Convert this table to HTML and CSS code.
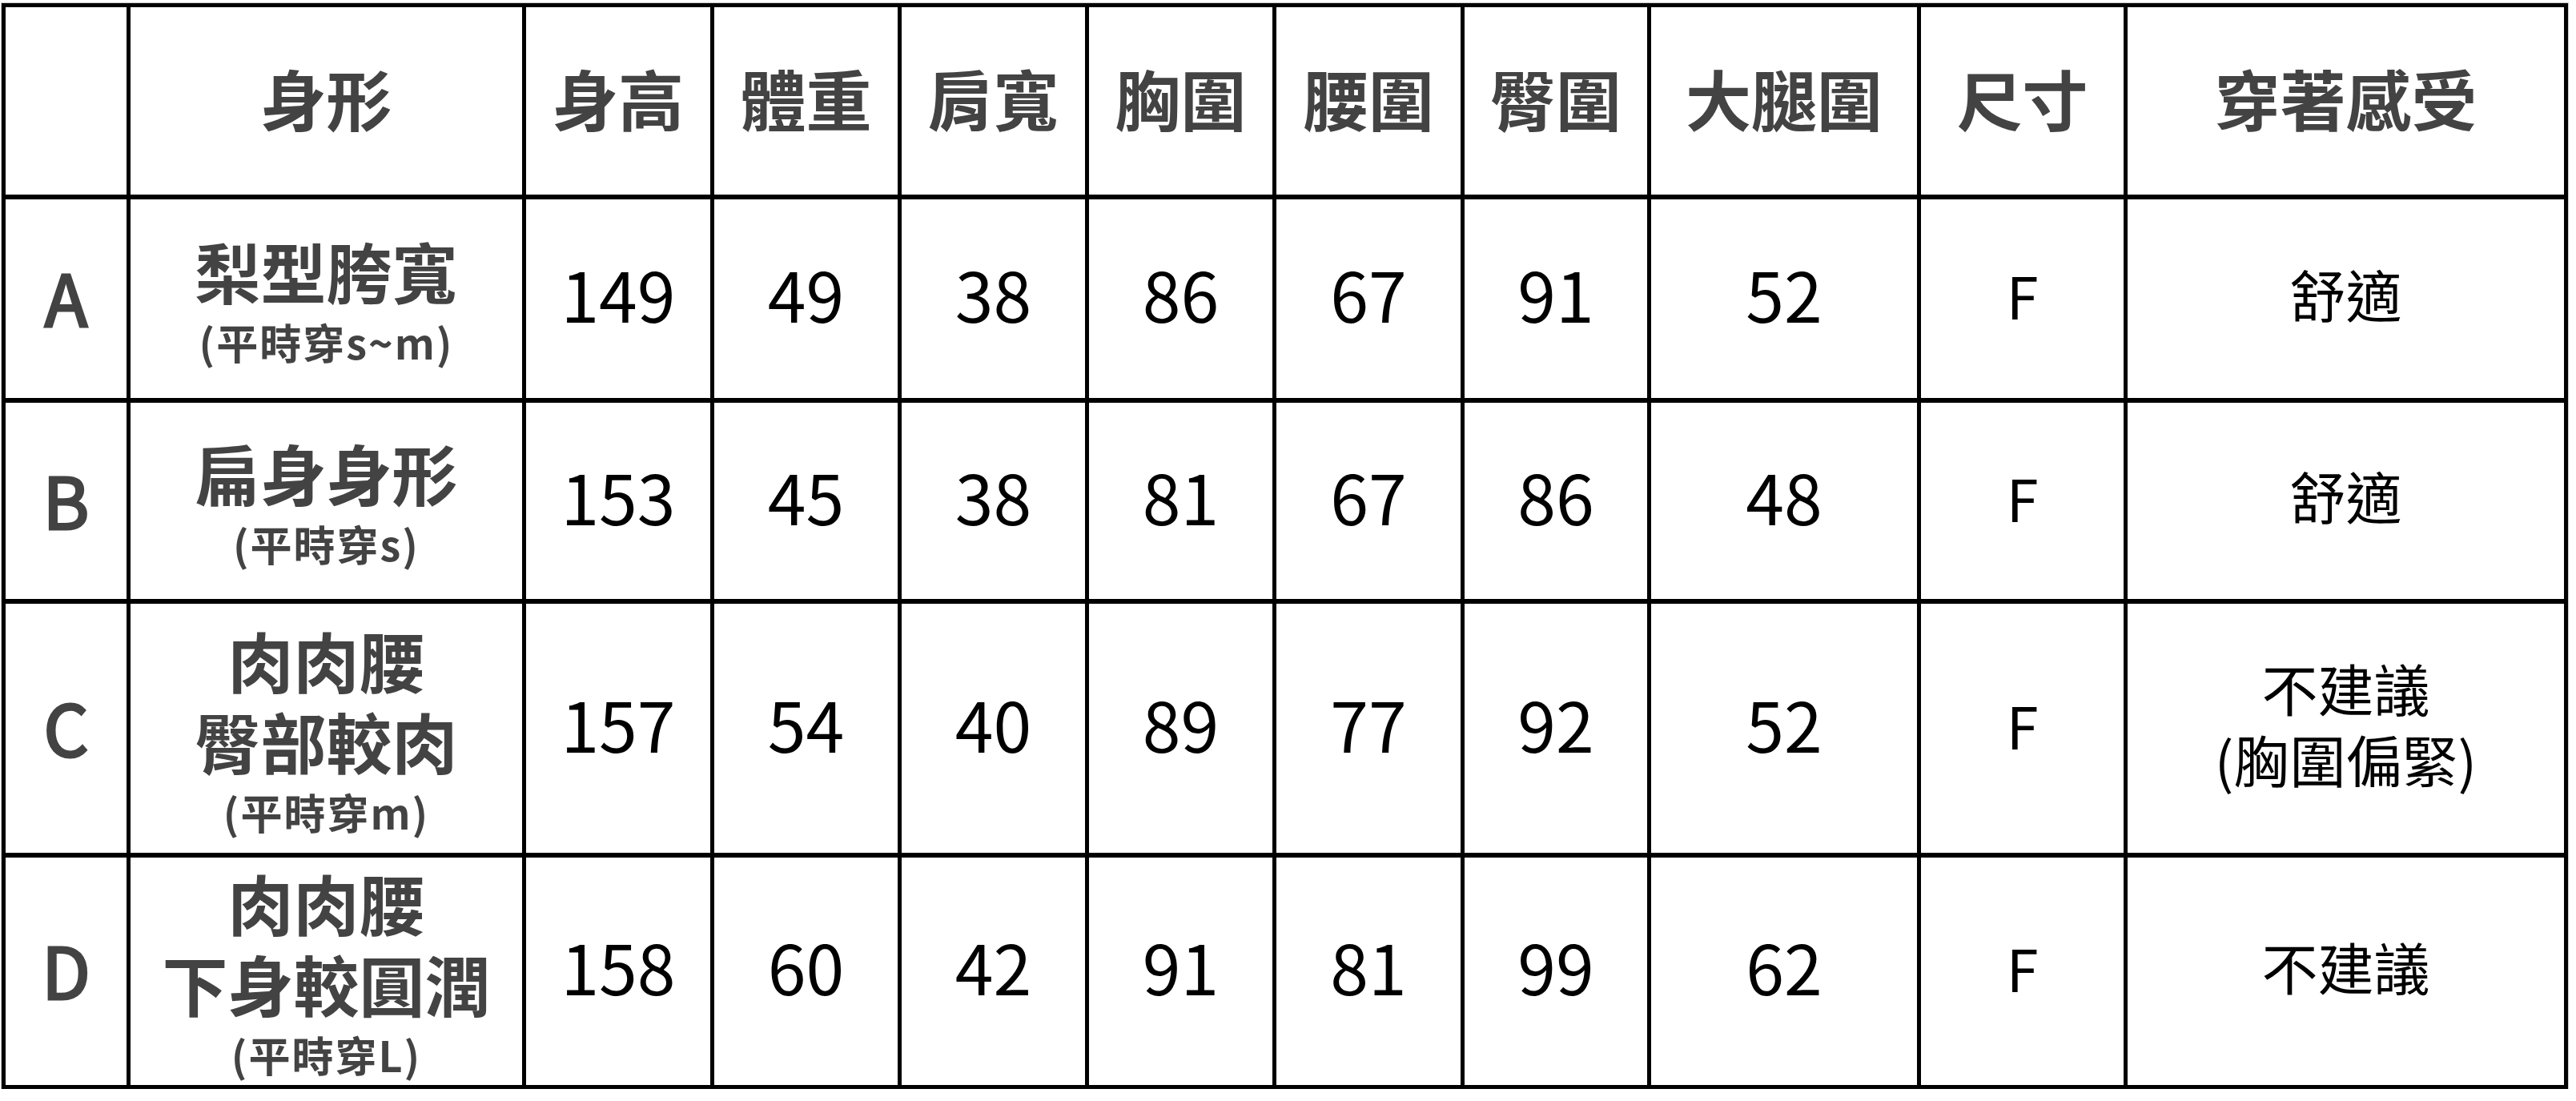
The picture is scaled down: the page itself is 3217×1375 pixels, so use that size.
FILE: index.html
```html
<!DOCTYPE html>
<html lang="zh-Hant">
<head>
<meta charset="utf-8">
<title>尺寸參考表</title>
<link rel="stylesheet" href="styles.css">
</head>
<body>
<div class="page">
  <div class="sheet">
    <div class="cell"></div>
    <div class="cell hd">身形</div>
    <div class="cell hd">身高</div>
    <div class="cell hd">體重</div>
    <div class="cell hd">肩寬</div>
    <div class="cell hd">胸圍</div>
    <div class="cell hd">腰圍</div>
    <div class="cell hd">臀圍</div>
    <div class="cell hd">大腿圍</div>
    <div class="cell hd">尺寸</div>
    <div class="cell hd">穿著感受</div>

    <div class="cell key">A</div>
    <div class="cell shape"><span class="main">梨型胯寬</span><span class="sub">(平時穿s~m)</span></div>
    <div class="cell num">149</div>
    <div class="cell num">49</div>
    <div class="cell num">38</div>
    <div class="cell num">86</div>
    <div class="cell num">67</div>
    <div class="cell num">91</div>
    <div class="cell num">52</div>
    <div class="cell size">F</div>
    <div class="cell feel">舒適</div>

    <div class="cell key">B</div>
    <div class="cell shape"><span class="main">扁身身形</span><span class="sub">(平時穿s)</span></div>
    <div class="cell num">153</div>
    <div class="cell num">45</div>
    <div class="cell num">38</div>
    <div class="cell num">81</div>
    <div class="cell num">67</div>
    <div class="cell num">86</div>
    <div class="cell num">48</div>
    <div class="cell size">F</div>
    <div class="cell feel">舒適</div>

    <div class="cell key">C</div>
    <div class="cell shape"><span class="main">肉肉腰</span><span class="main">臀部較肉</span><span class="sub">(平時穿m)</span></div>
    <div class="cell num">157</div>
    <div class="cell num">54</div>
    <div class="cell num">40</div>
    <div class="cell num">89</div>
    <div class="cell num">77</div>
    <div class="cell num">92</div>
    <div class="cell num">52</div>
    <div class="cell size">F</div>
    <div class="cell feel"><span>不建議</span><span>(胸圍偏緊)</span></div>

    <div class="cell key">D</div>
    <div class="cell shape"><span class="main">肉肉腰</span><span class="main">下身較圓潤</span><span class="sub">(平時穿L)</span></div>
    <div class="cell num">158</div>
    <div class="cell num">60</div>
    <div class="cell num">42</div>
    <div class="cell num">91</div>
    <div class="cell num">81</div>
    <div class="cell num">99</div>
    <div class="cell num">62</div>
    <div class="cell size">F</div>
    <div class="cell feel">不建議</div>
  </div>
</div>
</body>
</html>
```

FILE: styles.css
```css
html, body {
  margin: 0;
  padding: 0;
  background: #ffffff;
}

body {
  font-family: "Noto Sans CJK TC", "Noto Sans", sans-serif;
  color: #000;
}

.page {
  padding: 4px 0 0 2px;
}

.sheet {
  display: grid;
  width: max-content;
  grid-template-columns: 156px 494px 235px 234px 234px 234px 235px 233px 337px 258px 550px;
  grid-template-rows: 240px 254px 251px 317px 289px;
  border-top: 5px solid #000;
  border-left: 5px solid #000;
  outline: 1px solid #c9c9c9;
}

.cell {
  box-sizing: border-box;
  border-right: 5px solid #000;
  border-bottom: 6px solid #000;
  display: flex;
  flex-direction: column;
  align-items: center;
  justify-content: center;
  text-align: center;
  white-space: nowrap;
}

.cell:nth-last-child(-n+11) {
  border-bottom-width: 5px;
}

.hd {
  font-size: 82px;
  font-weight: 700;
  color: #434343;
  line-height: 1;
  padding-bottom: 8px;
}

.key {
  font-size: 88px;
  font-weight: 400;
  color: #434343;
  line-height: 1;
  padding-bottom: 6px;
  -webkit-text-stroke: 3px #434343;
}

.shape {
  color: #434343;
  font-weight: 700;
  padding-top: 6px;
}

.shape .main {
  font-size: 82px;
  line-height: 101px;
}

.shape .sub {
  font-size: 52px;
  line-height: 78px;
  letter-spacing: 2px;
}

.num {
  font-size: 86px;
  line-height: 1;
  padding-bottom: 14px;
}

.size {
  font-size: 72px;
  line-height: 1;
  padding-bottom: 10px;
}

.feel {
  font-size: 70px;
  line-height: 89px;
  padding-bottom: 14px;
}
```
